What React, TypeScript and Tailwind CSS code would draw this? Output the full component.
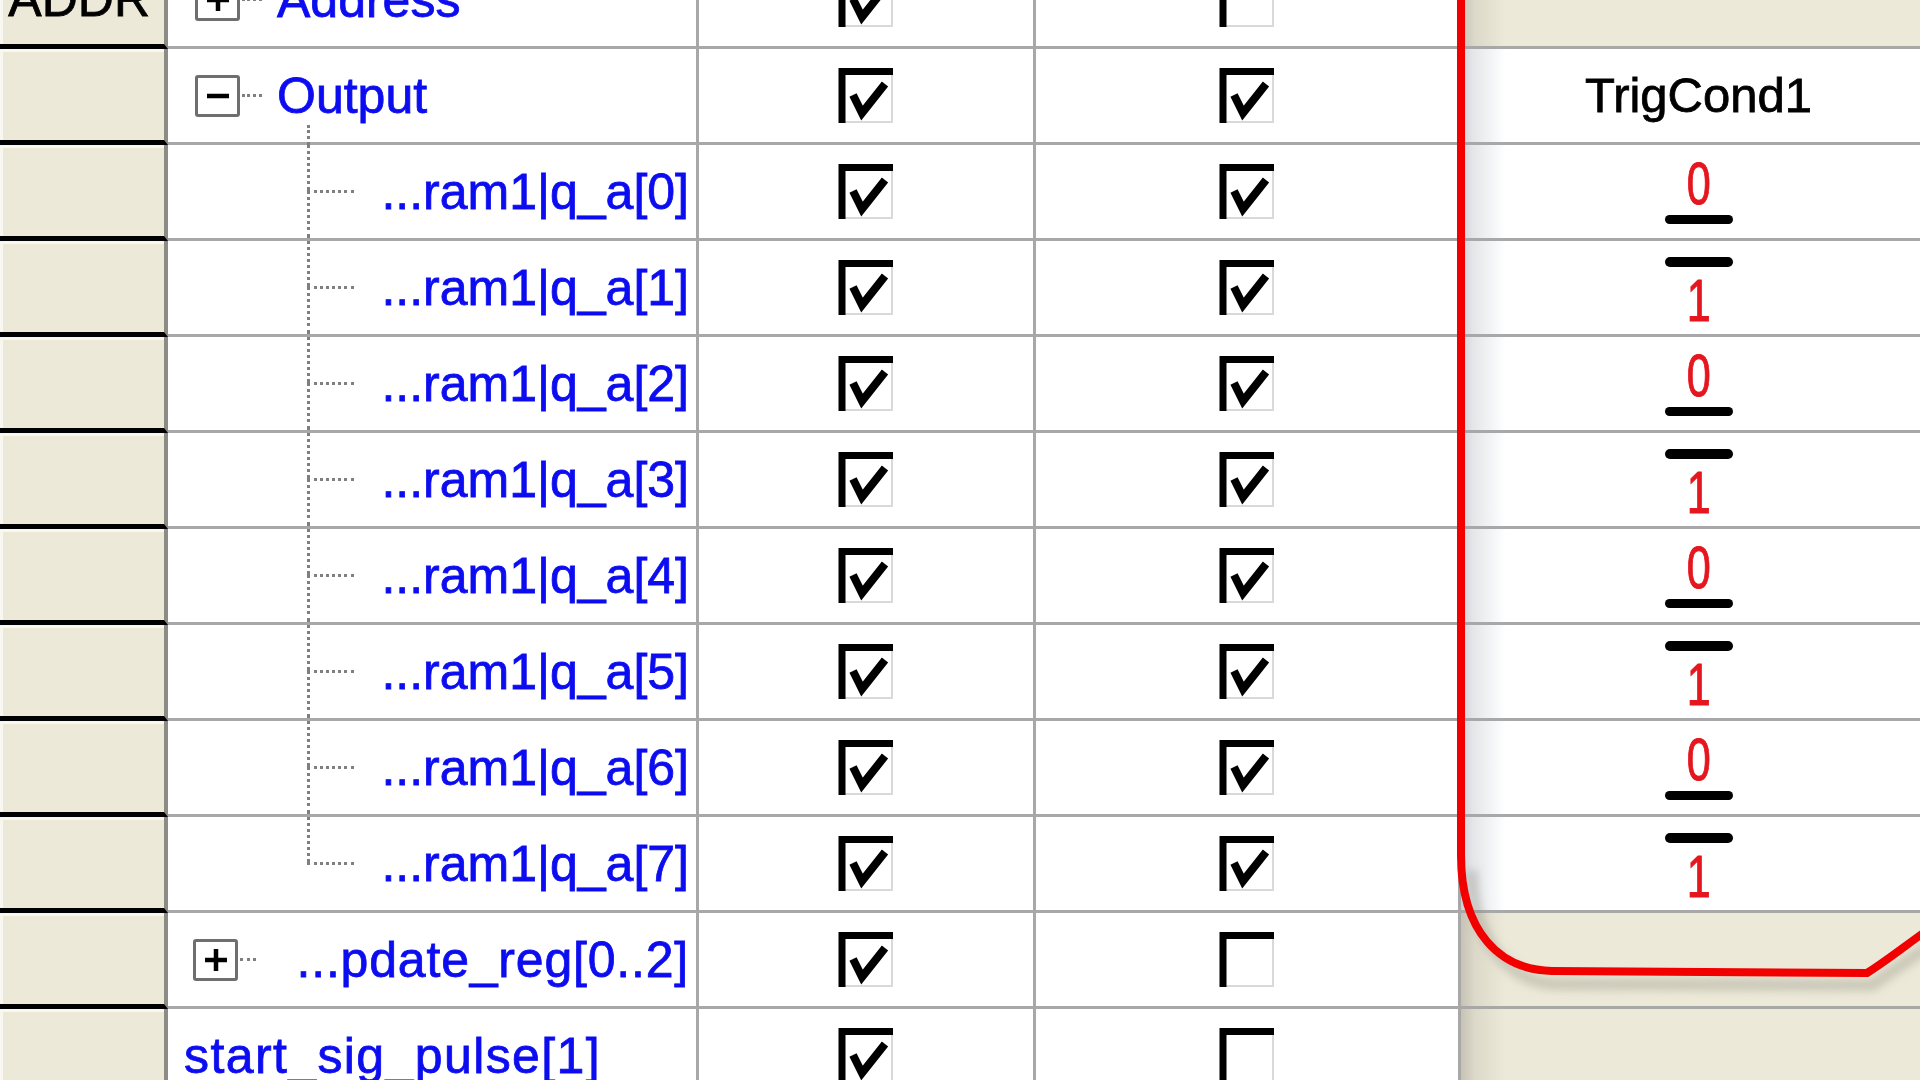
type Row = {
  kind: "address" | "output" | "child" | "pdate" | "start";
  label?: string;
  trig: boolean;
  level?: 0 | 1;
  last?: boolean;
};

const rows: Row[] = [
  { kind: "address", label: "Address", trig: false },
  { kind: "output", label: "Output", trig: true },
  ...Array.from({ length: 8 }, (_, i) => ({
    kind: "child" as const,
    label: `...ram1|q_a[${i}]`,
    trig: true,
    level: (i % 2) as 0 | 1,
    last: i === 7,
  })),
  { kind: "pdate", label: "...pdate_reg[0..2]", trig: false },
  { kind: "start", label: "start_sig_pulse[1]", trig: false },
];

function CheckBox({ checked }: { checked: boolean }) {
  return (
    <svg width="56" height="56" viewBox="0 0 56 56">
      <path d="M54 5 V54 H5" stroke="#d9d9d9" strokeWidth="2" fill="none" />
      <path d="M4 55 L4 3.5 L55 3.5" stroke="#000" strokeWidth="7" fill="none" />
      {checked && (
        <path d="M15 27 L24 45 L47 16" stroke="#000" strokeWidth="8" fill="none" strokeLinejoin="miter" />
      )}
    </svg>
  );
}

function Toggle({ open }: { open: boolean }) {
  return (
    <span className="flex h-[42px] w-[45px] shrink-0 items-center justify-center rounded-[3px] border-[3px] border-[#6e6e6e] bg-white">
      <svg width="24" height="24" viewBox="0 0 24 24">
        <path d="M1 12 H23" stroke="#000" strokeWidth="4.5" />
        {!open && <path d="M12 1 V23" stroke="#000" strokeWidth="4.5" />}
      </svg>
    </span>
  );
}

const digit =
  "block h-[60px] scale-x-[0.72] text-[60px] leading-none text-[#e4161e] [-webkit-text-stroke:1px_#e4161e]";

function Level({ v }: { v: 0 | 1 }) {
  if (v === 0) {
    return (
      <div className="flex h-full flex-col items-center justify-end pb-[14px]">
        <span className={digit}>0</span>
        <span className="mt-[1px] h-[9px] w-[68px] rounded-full bg-black" />
      </div>
    );
  }
  return (
    <div className="flex h-full flex-col items-center pt-[16px]">
      <span className="h-[10px] w-[68px] rounded-full bg-black" />
      <span className={`mt-[4px] ${digit}`}>1</span>
    </div>
  );
}

const dots = "border-dotted border-[#7f7f7f]";

function NameCell({ row }: { row: Row }) {
  const text =
    "text-[50px] leading-none text-[#0c0cf0] whitespace-nowrap [-webkit-text-stroke:0.8px_#0c0cf0]";
  if (row.kind === "address" || row.kind === "output") {
    return (
      <div className="relative flex h-full items-center pl-[27px]">
        <Toggle open={row.kind === "output"} />
        <span className={`ml-[2px] w-[20px] border-t-[3px] ${dots}`} />
        <span className={`ml-[15px] ${text}`}>{row.label}</span>
        {row.kind === "output" && (
          <span className={`absolute bottom-[-3px] left-[139px] top-[76px] border-l-[3px] ${dots}`} />
        )}
      </div>
    );
  }
  if (row.kind === "child") {
    return (
      <div className="flex h-full items-stretch">
        <div className="w-[139px] shrink-0" />
        <div className="flex w-[47px] shrink-0 flex-col">
          <div className={`flex-1 border-l-[3px] ${dots}`} />
          <div
            className={
              row.last
                ? `flex-1 border-t-[3px] ${dots}`
                : `flex-1 border-l-[3px] border-t-[3px] ${dots}`
            }
          />
        </div>
        <span className={`ml-auto self-center pr-[7px] ${text}`}>{row.label}</span>
      </div>
    );
  }
  if (row.kind === "pdate") {
    return (
      <div className="flex h-full items-center pl-[25px]">
        <Toggle open={false} />
        <span className={`ml-[2px] w-[16px] border-t-[3px] ${dots}`} />
        <span className={`ml-auto pr-[7px] tracking-[0.8px] ${text}`}>{row.label}</span>
      </div>
    );
  }
  return (
    <div className="flex h-full items-center pl-[16px]">
      <span className={`tracking-[1.4px] ${text}`}>{row.label}</span>
    </div>
  );
}

function TrigCell({ row }: { row: Row }) {
  const white = "bg-[linear-gradient(to_right,#cdd1d5_0px,#e4e6e9_12px,#ffffff_44px)]";
  const beige = "bg-[linear-gradient(to_right,#c6c3b4_0px,#dcd9ca_14px,#ece9d8_44px)]";
  const isWhite = row.kind === "output" || row.kind === "child";
  return (
    <div className={`h-full border-b-[3px] border-[#a8a8a8] pl-[16px] ${isWhite ? white : beige}`}>
      {row.kind === "output" && (
        <div className="flex h-full items-center justify-center text-[49px] leading-none text-black [-webkit-text-stroke:0.8px_#000]">
          TrigCond1
        </div>
      )}
      {row.kind === "child" && row.level !== undefined && <Level v={row.level} />}
    </div>
  );
}

function RedOutline() {
  return (
    <svg className="pointer-events-none absolute left-0 top-0" width="1920" height="1080" viewBox="0 0 1920 1080">
      <defs>
        <filter id="soft" x="-10%" y="-50%" width="120%" height="200%">
          <feGaussianBlur stdDeviation="4" />
        </filter>
      </defs>
      <path
        d="M1472 870 C1472 945 1512 983 1558 984 L1872 985 L1926 948"
        stroke="#8d8a7c"
        strokeOpacity="0.35"
        strokeWidth="12"
        fill="none"
        filter="url(#soft)"
      />
      <path
        d="M1461 -5 L1461 855 C1461 932 1500 970 1552 971 L1867 973 C1886 961 1905 946 1926 931"
        stroke="#f20000"
        strokeWidth="8"
        fill="none"
        strokeLinejoin="round"
      />
    </svg>
  );
}

export default function App() {
  return (
    <div className="relative h-[1080px] w-[1920px] overflow-hidden bg-white font-['Liberation_Sans',Arial,sans-serif]">
      <div className="-mt-[47px] flex flex-col">
        {rows.map((row, i) => (
          <div key={i} className="grid h-[96px] grid-cols-[168px_531px_337px_425px_1fr]">
            <div className="flex items-center justify-end overflow-hidden border-b-[5px] border-r-[4px] border-b-black border-r-[#8c8c84] bg-[#ece9d8] pr-[14px] shadow-[inset_3px_3px_0_#f8f7f1]">
              {row.kind === "address" && (
                <span className="text-[50px] leading-none text-black whitespace-nowrap [-webkit-text-stroke:0.8px_#000]">
                  ADDR
                </span>
              )}
            </div>
            <div className="border-b-[3px] border-r-[3px] border-[#a8a8a8]">
              <NameCell row={row} />
            </div>
            <div className="flex items-center justify-center border-b-[3px] border-r-[3px] border-[#a8a8a8]">
              <CheckBox checked />
            </div>
            <div className="flex items-center justify-center border-b-[3px] border-r-[3px] border-[#a8a8a8]">
              <CheckBox checked={row.trig} />
            </div>
            <TrigCell row={row} />
          </div>
        ))}
      </div>
      <RedOutline />
    </div>
  );
}
